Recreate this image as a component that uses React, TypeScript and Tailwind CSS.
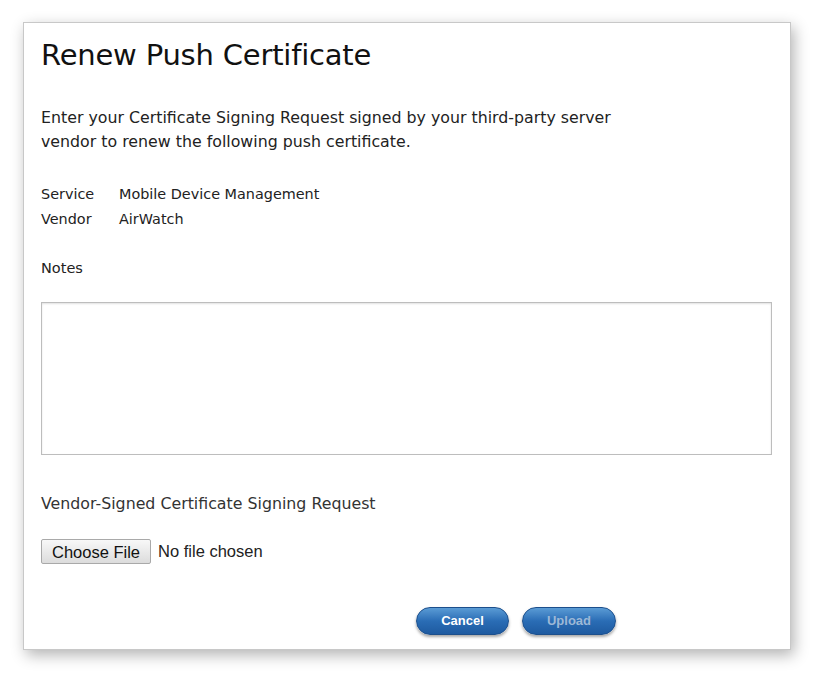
export default function App() {
  return (
    <div className="w-[814px] h-[673px] bg-white pt-[22px] pl-[23px]" style={{ fontFamily: '"DejaVu Sans", sans-serif' }}>
      <div className="w-[768px] h-[628px] bg-white border border-[#c8c8c8] shadow-[3px_5px_14px_rgba(0,0,0,0.3)] flex flex-col px-[17px]">
        <h1 className="mt-[15px] text-[29px] leading-[34px] text-[#111] font-normal tracking-[-0.2px]">Renew Push Certificate</h1>
        <p className="mt-[34px] text-[15.8px] leading-[24px] text-[#222] w-[600px]">
          Enter your Certificate Signing Request signed by your third-party server vendor to renew the following push certificate.
        </p>
        <div className="mt-[28px] grid grid-cols-[78px_1fr] text-[14.4px] leading-[25px] text-[#222]">
          <span>Service</span>
          <span>Mobile Device Management</span>
          <span>Vendor</span>
          <span>AirWatch</span>
        </div>
        <div className="mt-[26px] text-[14.5px] leading-[20px] text-[#222]">Notes</div>
        <textarea className="mt-[24px] w-[731px] h-[153px] border border-[#bdbdbd] shadow-[inset_0_1px_2px_rgba(0,0,0,0.12)] resize-none outline-none" />
        <div className="mt-[39px] text-[15.8px] leading-[20px] text-[#333]">Vendor-Signed Certificate Signing Request</div>
        <div className="mt-[25px] flex items-center gap-[7px]" style={{ fontFamily: '"Liberation Sans", Arial, sans-serif' }}>
          <button className="h-[25px] px-[10px] text-[16.5px] text-[#111] border border-[#a9a9a9] rounded-[2px] bg-gradient-to-b from-[#f8f8f8] to-[#dcdcdc]">Choose File</button>
          <span className="text-[16.5px] text-[#222]">No file chosen</span>
        </div>
        <div className="mt-[43px] flex justify-end gap-[13px] pr-[157px]" style={{ fontFamily: '"Liberation Sans", Arial, sans-serif' }}>
          <button className="w-[93px] h-[28px] rounded-full text-[13px] font-bold text-white bg-gradient-to-b from-[#5a9bd5] via-[#2a6db5] to-[#1e5aa0] border border-[#1c4f8c] shadow-[0_2px_3px_rgba(0,0,0,0.35)]">Cancel</button>
          <button className="w-[94px] h-[28px] rounded-full text-[13px] font-bold text-[#9db8d6] bg-gradient-to-b from-[#5a9bd5] via-[#2a6db5] to-[#1e5aa0] border border-[#1c4f8c] shadow-[0_2px_3px_rgba(0,0,0,0.35)]">Upload</button>
        </div>
      </div>
    </div>
  )
}
